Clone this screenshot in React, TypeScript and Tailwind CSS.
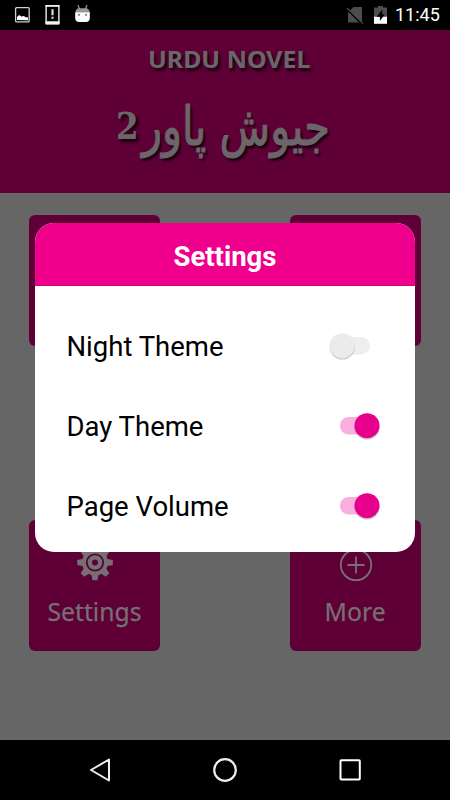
import React from "react";

const roboto = "font-['Roboto',sans-serif]";
const noto = "font-['Noto_Sans',sans-serif]";

function StatusBar() {
  return (
    <div className="flex h-[30px] items-center bg-black">
      <svg width="110" height="30" viewBox="0 0 110 30">
        <rect x="15.6" y="7.6" width="13.6" height="14.3" rx="1" fill="#000" stroke="#d0d0d0" strokeWidth="1.3" />
        <path d="M17 20V17l2.2-2.1 2 1.5 2.8-.4 1.5 1.3H28v2.9z" fill="#fff" />
        <rect x="46.1" y="5.7" width="12.8" height="18" rx="0.5" fill="#000" stroke="#fff" strokeWidth="1.3" />
        <path d="M45.5 21.2h14v3.2h-14zM45.5 5h14v1.8h-14z" fill="#f2f2f2" />
        <path d="M51.4 9.3h2.2v6h-2.2zM51.4 16.8h2.2v2h-2.2z" fill="#ddd" />
        <path d="M78 5l1.6 4M87 5l-1.6 4" stroke="#bbb" strokeWidth="1" />
        <path d="M75.2 12.6Q76 8.3 79 8.3h7q3 0 3.8 4.3z" fill="#999" />
        <path d="M75.2 12.2h14.6v6q0 3.7-4 3.7h-6.6q-4 0-4-3.7z" fill="#fff" />
        <circle cx="79" cy="14.8" r="0.9" fill="#444" /><circle cx="86" cy="14.8" r="0.9" fill="#444" />
      </svg>
      <svg className="ml-auto" width="50" height="30" viewBox="340 0 50 30">
        <path d="M353.5 7h8.5v15.4h-14v-10z" fill="#4d4d4d" />
        <path d="M346.3 8.3l16.2 15.9" stroke="#000" strokeWidth="2.3" />
        <path d="M347 7.8l16.1 15.8" stroke="#555" strokeWidth="1.1" />
        <path d="M378 6h5v1.5h4v10h-13v-10h4z" fill="#4d4d4d" />
        <path d="M374 16.8h13v7h-13z" fill="#fff" />
        <path d="M382.2 9.8l-5.5 6.9h3.2v4.4l5-6.8h-2.7z" fill="#000" />
      </svg>
      <span className={`${roboto} mr-[10px] w-[50px] whitespace-nowrap pl-[5px] text-[18px] leading-[32px] text-white`}>11:45</span>
    </div>
  );
}

function Header() {
  return (
    <header className="flex h-[163px] flex-col items-center bg-[#5e0036] text-[#6b6669]">
      <h1 className={`${noto} mt-[13px] ml-[7px] h-8 w-[162px] origin-left scale-x-[1.037] whitespace-nowrap text-[24px] font-bold leading-8 [text-shadow:2px_3px_3px_#18000e]`}>
        URDU NOVEL
      </h1>
      <div dir="rtl" className="mt-[15px] mr-[4px] flex h-[74px] w-[214px] items-center justify-between whitespace-nowrap leading-[74px] [text-shadow:3px_3px_3px_#18000e]">
        <span className="w-[182px] origin-right scale-x-[0.77] font-['DejaVu_Sans',sans-serif] text-[54px] [-webkit-text-stroke:1.1px_#6b6669]">جیوش پاور</span>
        <span className="pb-0.5 origin-left scale-x-[0.88] font-['DejaVu_Serif',serif] text-[37px] font-bold">2</span>
      </div>
    </header>
  );
}

function Tile({ label, children }: { label?: string; children?: React.ReactNode }) {
  return (
    <div className="flex h-[131px] w-[131px] flex-col items-center rounded-[6px] bg-[#5e0036] text-[#766f73]">
      <div className="mt-[22px] h-[44px]">{children}</div>
      {label && <span className={`${noto} scale-x-[0.95] text-[26px] leading-[50px] [-webkit-text-stroke:0.25px_#766f73]`}>{label}</span>}
    </div>
  );
}

function Gear() {
  return (
    <svg width="36" height="44" viewBox="-18 -20.5 36 44" fill="currentColor">
      {[0, 45, 90, 135, 180, 225, 270, 315].map((a) => (
        <path key={a} d="M-3.8-11L-2.5-17.8h5L3.8-11z" transform={`rotate(${a})`} />
      ))}
      <circle r="13" />
      <circle r="8.2" fill="none" stroke="#5e0036" strokeWidth="1.8" />
      <circle r="3" fill="#5e0036" />
    </svg>
  );
}

function Plus() {
  return (
    <svg width="36" height="44" viewBox="-18 -23 36 44" fill="none" stroke="currentColor" strokeWidth="1.8">
      <circle r="15.2" />
      <path d="M-8.5 0h17M0-8.5v17" />
    </svg>
  );
}

function Toggle({ on }: { on: boolean }) {
  return (
    <svg width="64" height="40" viewBox="-8 -20 64 40">
      <rect x="5" y="-9" width="30" height="17.5" rx="8.5" fill={on ? "#f9aedb" : "#eeeeee"} />
      <circle cx={on ? 32 : 7.3} cy="1" r="12.6" fill="#000" opacity="0.2" />
      <circle cx={on ? 32 : 7.3} cy="-0.3" r="12.5" fill={on ? "#e6008b" : "#ebebeb"} />
    </svg>
  );
}

function SettingRow({ label, on }: { label: string; on: boolean }) {
  return (
    <div className="flex h-20 items-center justify-between pl-[31.5px] pr-6">
      <span className="pt-0.5 text-[27.5px] leading-8">{label}</span>
      <Toggle on={on} />
    </div>
  );
}

function SettingsDialog() {
  return (
    <section className={`${roboto} absolute left-[35px] top-[223px] h-[329px] w-[380px] overflow-hidden rounded-[19px] bg-white text-black`}>
      <h2 className="h-[63px] border-b border-[#d0007c] bg-[#ee008c] text-center text-[27.5px] font-bold leading-[67px] text-white">Settings</h2>
      <div className="pt-5">
        <SettingRow label="Night Theme" on={false} />
        <SettingRow label="Day Theme" on />
        <SettingRow label="Page Volume" on />
      </div>
    </section>
  );
}

function NavBar() {
  return (
    <nav className="flex h-[60px] items-center justify-between bg-black px-[80px]">
      <svg width="40" height="60" viewBox="-20 -30 40 60"><path d="M-9 0L9-10.5V10.5z" fill="none" stroke="#eee" strokeWidth="2" strokeLinejoin="round" /></svg>
      <svg width="40" height="60" viewBox="-20 -30 40 60"><circle r="10.8" fill="none" stroke="#eee" strokeWidth="2.2" /></svg>
      <svg width="40" height="60" viewBox="-20 -30 40 60"><rect x="-9.5" y="-9.7" width="19.3" height="19.3" rx="0.8" fill="none" stroke="#fff" strokeWidth="2" /></svg>
    </nav>
  );
}

export default function App() {
  return (
    <div className="relative flex h-[800px] w-[450px] flex-col overflow-hidden bg-[#666]">
      <StatusBar />
      <Header />
      <main className="flex flex-1 flex-col gap-[174px] pl-[29px] pr-[29px] pt-[21.5px]">
        <div className="flex justify-between"><Tile /><Tile /></div>
        <div className="flex justify-between">
          <Tile label="Settings"><Gear /></Tile>
          <Tile label="More"><Plus /></Tile>
        </div>
      </main>
      <NavBar />
      <SettingsDialog />
    </div>
  );
}
